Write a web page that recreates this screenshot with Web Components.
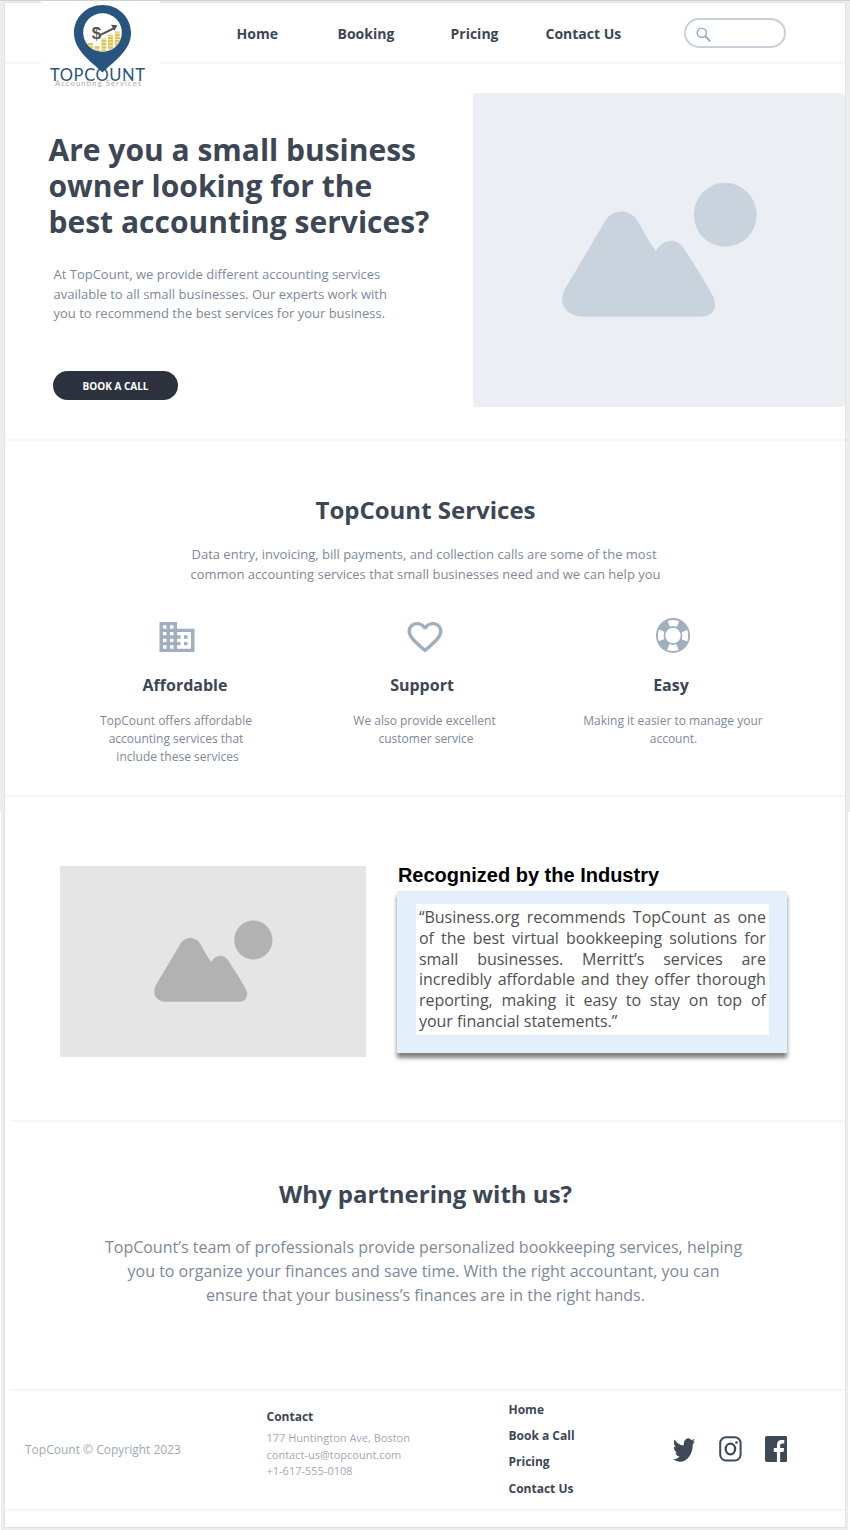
<!DOCTYPE html>
<html lang="en">
<head>
<meta charset="utf-8">
<title>TopCount</title>
<style>
html,body{margin:0;padding:0}
body{background:#ededed;font-family:"Open Sans",sans-serif;color:#3d4654}
</style>
</head>
<body>
<topcount-page></topcount-page>
<script>
function define(name, css, html) {
  const t = document.createElement('template');
  t.innerHTML = `<style>*{box-sizing:border-box}:host{display:block;box-sizing:border-box}${css}</style>${html}`;
  customElements.define(name, class extends HTMLElement {
    constructor() {
      super();
      this.attachShadow({mode: 'open'}).appendChild(t.content.cloneNode(true));
    }
  });
}

define('tc-logo', `
:host{width:119px;height:92px;background:#fff}
svg{display:block}
`, `<svg width="119" height="92" viewBox="41 1 119 92">
<path d="M102.500 5C86.500 5 74 17.500 74 33c0 17 16 27.500 28.500 39.500C115 60.500 131 50 131 33 131 17.500 118.500 5 102.500 5z" fill="#27557f"/>
<circle cx="102.500" cy="32.500" r="19.300" fill="#fff"/>
<clipPath id="c"><circle cx="102.500" cy="32.500" r="19.300"/></clipPath>
<g clip-path="url(#c)" stroke="#dfc458" stroke-width="5" stroke-dasharray="2.600 .6" fill="none">
<path d="M90.500 52V42.500M97 52V46M103.800 52V38.500M110.500 52V35M117.300 52V31.500"/></g>
<text x="91.800" y="39" font-family="Liberation Sans,sans-serif" font-weight="700" font-size="17" fill="#555">$</text>
<path d="M99.500 35.300L114.500 28" stroke="#555" stroke-width="2" fill="none"/><path d="M111 24.800l6.500.5-3 5.500z" fill="#555"/>
<text x="50" y="80.500" textLength="95" font-family="Lato,sans-serif" font-size="16.500" fill="#27557f">TOPCOUNT</text>
<text x="55" y="85.500" textLength="86" font-family="Lato,sans-serif" font-size="7.500" fill="#a9a9a9">Accounting Services</text>
</svg>`);

define('tc-search', `
:host{width:102px;height:30px;border:2px solid #c8d0dc;border-radius:15px;padding:7px 0 0 10px}
svg{display:block}
`, `<svg width="16" height="16" viewBox="0 0 16 16" fill="none" stroke="#a0aec0"><circle cx="5.800" cy="5.800" r="4.600" stroke-width="1.600"/><path d="M9.300 9.300l5 5" stroke-width="2"/></svg>`);

define('tc-header', `
:host{height:61px;border-bottom:2px solid #f6f6f6;position:relative}
nav{display:grid;grid-template-columns:101px 113px 95px 138.500px 102px;padding:15px 0 0 231.500px;font:700 14px/32px "Open Sans",sans-serif}
tc-logo{position:absolute;left:36px;top:-2px}
`, `<nav><span>Home</span><span>Booking</span><span>Pricing</span><span>Contact Us</span><tc-search></tc-search></nav><tc-logo></tc-logo>`);

define('tc-picture', `
:host{background:var(--bg);color:var(--fg)}
svg{display:block;width:100%;height:100%}
`, `<svg viewBox="0 0 371 315" fill="currentColor"><ellipse cx="252" cy="122" rx="31.500" ry="32"/>
<path d="M131 129.500C138 116 157 114 166 131C170 139 176 149 182.500 158.500C190 145 203 145 210 155C220 170 230 186 238 200C246 213 241 224 228 224H110C93 224 84 212 91 197z"/></svg>`);

define('tc-hero', `
:host{height:377px;border-bottom:2px solid #f6f6f6;display:grid;grid-template-columns:468.300px 371.700px}
h1{margin:68px 0 0 43.500px;font:700 30px/36px "Open Sans",sans-serif}
p{margin:25px 0 0 48.500px;font-size:13px;line-height:19.500px;color:#7d8999}
span{display:block;white-space:nowrap}
.btn{margin:47px 0 0 48px;width:125px;height:29px;border-radius:15px;background:#2c333f;color:#fff;font:700 10px/31px "Open Sans",sans-serif;text-align:center}
tc-picture{margin-top:28.600px;height:314.500px;border-radius:4px;--bg:#ebeff4;--fg:#c9d3dd}
`, `<div><h1><span>Are you a small business</span><span>owner looking for the</span><span>best accounting services?</span></h1>
<p><span>At TopCount, we provide different accounting services</span><span>available to all small businesses. Our experts work with</span><span>you to recommend the best services for your business.</span></p>
<div class="btn">BOOK A CALL</div></div><tc-picture></tc-picture>`);

define('tc-feature', `
:host{text-align:center}
.i{height:40px;display:flex;justify-content:center;color:#a0aec0;padding-left:var(--ix,0)}
.h{margin-top:16px;font:700 16px/24px "Open Sans",sans-serif;padding-left:var(--hl,0);padding-right:var(--hr,0)}
.t{margin-top:15px;font-size:12px;line-height:18px;color:#7d8999}
`, `<div class="i"><slot name="icon"></slot></div><div class="h"><slot name="title"></slot></div><div class="t"><slot></slot></div>`);

define('tc-services', `
:host{height:356px;border-bottom:2px solid #f6f6f6;padding-top:51px;text-align:center}
h2{margin:0;padding-left:1px;font:700 24px/36px "Open Sans",sans-serif}
p{margin:16px 0 0;font-size:13px;line-height:20px;color:#7d8999}
span.l{display:block;white-space:nowrap}
.g{display:grid;grid-template-columns:180px 180px 200px;column-gap:68px;margin:33px 0 0 81px}
.g tc-feature:last-child{margin-left:-18px}
svg{display:block}
`, `<h2>TopCount Services</h2>
<p><span class="l" style="margin-right:2px">Data entry, invoicing, bill payments, and collection calls are some of the most</span><span class="l" style="margin-left:1px">common accounting services that small businesses need and we can help you</span></p>
<div class="g">
<tc-feature style="--ix:2px;--hl:18px"><svg slot="icon" width="42" height="40" viewBox="0 0 24 24" preserveAspectRatio="none" fill="currentColor"><path d="M12 7V3H2v18h20V7H12zM6 19H4v-2h2v2zm0-4H4v-2h2v2zm0-4H4V9h2v2zm0-4H4V5h2v2zm4 12H8v-2h2v2zm0-4H8v-2h2v2zm0-4H8V9h2v2zm0-4H8V5h2v2zm10 12h-8v-2h2v-2h-2v-2h2v-2h-2V9h8v10zm-2-8h-2v2h2v-2zm0 4h-2v2h2v-2z"/></svg><span slot="title">Affordable</span><span class="l">TopCount offers affordable</span><span class="l">accounting services that</span><span class="l" style="margin-left:3px">include these services</span></tc-feature>
<tc-feature style="--ix:1px;--hr:4px"><svg slot="icon" width="42" height="40" viewBox="0 0 24 24" preserveAspectRatio="none" fill="currentColor"><path d="M16.500 3c-1.740 0-3.410.81-4.500 2.090C10.910 3.810 9.240 3 7.500 3 4.420 3 2 5.420 2 8.500c0 3.780 3.400 6.860 8.550 11.540L12 21.350l1.450-1.320C18.600 15.360 22 12.280 22 8.500 22 5.420 19.580 3 16.500 3zm-4.400 15.550l-.1.100-.1-.1C7.140 14.240 4 11.390 4 8.500 4 6.500 5.500 5 7.500 5c1.540 0 3.040.99 3.570 2.360h1.870C13.460 5.990 14.960 5 16.500 5c2 0 3.500 1.500 3.500 3.500 0 2.890-3.140 5.740-7.900 10.050z"/></svg><span slot="title">Support</span><span class="l" style="margin-left:1px">We also provide excellent</span><span class="l" style="margin-left:4px">customer service</span></tc-feature>
<tc-feature style="--hr:4px"><svg slot="icon" width="36" height="37" viewBox="0 0 36 36" preserveAspectRatio="none" fill="none" stroke="currentColor"><circle cx="18" cy="18" r="16.100" stroke-width="1.800"/><circle cx="18" cy="18" r="8.500" stroke-width="1.700"/><circle cx="18" cy="18" r="12" stroke-width="8" stroke-dasharray="9.500 9.350" stroke-dashoffset="-4.670"/></svg><span slot="title">Easy</span><span class="l">Making it easier to manage your</span><span class="l" style="margin-left:1px">account.</span></tc-feature>
</div>`);

define('tc-recognition', `
:host{height:325px;display:grid;grid-template-columns:306px 389.500px;column-gap:31px;padding:69px 0 0 55.400px}
tc-picture{height:191px;--bg:#e5e5e5;--fg:#b2b2b2}
h2{margin:-3px 0 0;padding-left:.5px;font:700 20px/24px "Liberation Sans",Arial,sans-serif;color:#000}
.card{margin-top:3.500px;height:162.500px;background:#e3f0fc;padding:13.500px 18px 0 18.500px;box-shadow:0 5px 4px rgba(0,0,0,.5);border-radius:1px}
.q{height:131px;background:#fff;padding:3px 3px 0;font-size:16px;line-height:20.800px;color:#505050}
.q span{display:block;text-align:justify;text-align-last:justify;white-space:nowrap}
.q span:last-child{text-align-last:left}
`, `<tc-picture></tc-picture><div><h2>Recognized by the Industry</h2><div class="card"><div class="q"><span>“Business.org recommends TopCount as one</span> <span>of the best virtual bookkeeping solutions for</span> <span>small businesses. Merritt’s services are</span> <span>incredibly affordable and they offer thorough</span> <span>reporting, making it easy to stay on top of</span> <span>your financial statements.”</span></div></div></div>`);

define('tc-why', `
:host{border:solid #f6f6f6;border-width:2px 0;margin:-2px 0 0 5px;height:271px;padding:54px 5px 0 0;text-align:center}
h2{margin:0;padding-left:1px;font:700 24px/36px "Open Sans",sans-serif}
p{margin:23px 0 0;font-size:16px;line-height:24px;color:#7d8999}
span{display:block;white-space:nowrap}
`, `<h2>Why partnering with us?</h2><p><span style="margin-right:3px">TopCount’s team of professionals provide personalized bookkeeping services, helping</span><span style="margin-right:3px">you to organize your finances and save time. With the right accountant, you can</span><span style="margin-left:1px">ensure that your business’s finances are in the right hands.</span></p>`);

define('tc-footer', `
:host{height:120px;border-bottom:2px solid #f6f6f6;display:grid;grid-template-columns:241.500px 242px 164px 1fr;padding-left:20px}
.c{margin-top:50px;font-size:12px;line-height:18px;color:#a0a9b5}
.a{margin-top:17px;font-size:11px;line-height:16.500px;color:#a0a9b5}
.a b{display:block;font-size:12px;line-height:18px;color:#3d4654;margin-bottom:4px}
.a span{display:block}
.l{margin-top:5.700px;font:700 12px/26.400px "Open Sans",sans-serif}
.l div{height:26.400px}
.s{display:flex;margin-top:43px;color:#3d4858}
.s svg{display:block}
`, `<div class="c">TopCount © Copyright 2023</div>
<div class="a"><b>Contact</b><span>177 Huntington Ave, Boston</span><span>contact-us@topcount.com</span><span>+1-617-555-0108</span></div>
<div class="l"><div>Home</div><div>Book a Call</div><div>Pricing</div><div>Contact Us</div></div>
<div class="s">
<svg width="22" height="24" viewBox="0 2 24 20" preserveAspectRatio="none" fill="currentColor" style="margin-top:4px"><path d="M23.950 4.570a10 10 0 0 1-2.820.77 4.960 4.960 0 0 0 2.160-2.720c-.95.550-2 .95-3.130 1.180a4.920 4.920 0 0 0-8.380 4.480C7.690 8.090 4.070 6.130 1.640 3.160a4.820 4.820 0 0 0-.67 2.480c0 1.710.87 3.210 2.190 4.100a4.900 4.900 0 0 1-2.230-.62v.06a4.920 4.920 0 0 0 3.950 4.830 5 5 0 0 1-2.210.08 4.940 4.940 0 0 0 4.600 3.420A9.870 9.870 0 0 1 0 19.540a13.990 13.990 0 0 0 7.560 2.210c9.050 0 14-7.500 14-13.980 0-.21 0-.42-.02-.63a9.940 9.940 0 0 0 2.460-2.550z"/></svg>
<svg width="23" height="26" viewBox="0 0 23 26" fill="none" stroke="currentColor" stroke-width="2" style="margin-left:24px;margin-top:2px"><rect x="1.200" y="1.200" width="20.400" height="23.400" rx="6"/><ellipse cx="11.400" cy="13" rx="4.700" ry="5.300" stroke-width="2.300"/><circle cx="17.500" cy="6.500" r="1.300" fill="currentColor" stroke="none"/></svg>
<svg width="22.500" height="26" viewBox="0 0 23 26" preserveAspectRatio="none" fill="currentColor" style="margin-left:23px;margin-top:2px"><path fill-rule="evenodd" d="M2 0h19a2 2 0 0 1 2 2v22a2 2 0 0 1-2 2h-5.500V16h3.400l.6-4h-4V9.500c0-1.200.5-2 2.200-2h2V4.100c-.8-.1-1.700-.2-2.700-.2-3 0-4.800 1.900-4.800 5.100v3H9v4h3.200v10H2a2 2 0 0 1-2-2V2a2 2 0 0 1 2-2z"/></svg>
</div>`);

define('topcount-page', `
:host{height:1530px;padding:2px 5px 3px;border-top:1px solid #d2d2d2;overflow:hidden;background:linear-gradient(#fff,#fff) 0 811px/1px 720px no-repeat,linear-gradient(#fff,#fff) 100% 811px/2px 720px no-repeat #ededed}
main{height:1524px;background:#fff;box-shadow:0 0 0 1px #e2e2e2}
`, `<main><tc-header></tc-header><tc-hero></tc-hero><tc-services></tc-services><tc-recognition></tc-recognition><tc-why></tc-why><tc-footer></tc-footer></main>`);
</script>
</body>
</html>
